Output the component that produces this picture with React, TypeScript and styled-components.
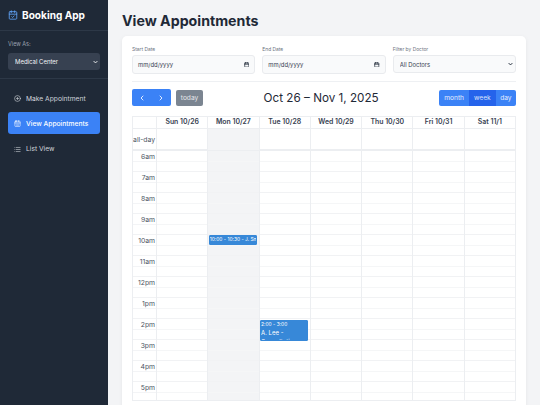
import React from 'react';
import styled, { createGlobalStyle } from 'styled-components';
import { ChevronLeft, ChevronRight, CalendarCheck, CirclePlus, CalendarDays, Calendar as CalendarIcon, List } from 'lucide-react';

const GlobalStyle = createGlobalStyle`
  html, body {
    margin: 0;
    padding: 0;
    height: 405px;
    overflow: hidden;
    font-family: Inter, "Liberation Sans", sans-serif;
    background: #f3f4f6;
  }
  * { box-sizing: border-box; }
`;

const chevron = (color: string) =>
  `url("data:image/svg+xml,%3Csvg xmlns='http://www.w3.org/2000/svg' viewBox='0 0 8 6'%3E%3Cpath d='M1 1.5l3 3 3-3' fill='none' stroke='${color}' stroke-width='1.5'/%3E%3C/svg%3E")`;

const Layout = styled.div`
  display: flex;
  width: 540px;
  height: 405px;
  overflow: hidden;
`;

const Sidebar = styled.aside`
  width: 108px;
  flex: none;
  background: #1f2937;
  color: #fff;
`;

const Brand = styled.div`
  height: 31px;
  padding: 0 8px;
  display: flex;
  align-items: center;
  gap: 4px;
  font-size: 10.1px;
  font-weight: 700;
  border-bottom: 1px solid #2d3847;
  svg { color: #60a5fa; }
`;

const ViewAs = styled.div`
  height: 48px;
  padding: 10px 8px 0;
  border-bottom: 1px solid #2d3847;
`;

const ViewAsLabel = styled.div`
  font-size: 5.5px;
  color: #9ca3af;
  line-height: 7px;
  margin-bottom: 5px;
`;

const ViewAsSelect = styled.select`
  display: block;
  appearance: none;
  width: 92px;
  height: 17px;
  font-family: inherit;
  font-size: 6px;
  color: #f3f4f6;
  background: #374151 ${chevron('%23f3f4f6')} no-repeat right 2px center / 5px 4px;
  border: none;
  border-radius: 3px;
  padding: 0 8px 0 7px;
`;

const Nav = styled.nav`
  padding: 8px 8px 0;
  display: flex;
  flex-direction: column;
  gap: 3.3px;
`;

const NavItem = styled.div<{ $active?: boolean }>`
  height: 22px;
  padding: 1px 6px 0;
  display: flex;
  align-items: center;
  gap: 5px;
  font-size: 6.7px;
  font-weight: ${({ $active }) => ($active ? 500 : 400)};
  border-radius: 3px;
  color: ${({ $active }) => ($active ? '#ffffff' : '#d1d5db')};
  background: ${({ $active }) => ($active ? '#3b82f6' : 'transparent')};
`;

const Main = styled.main`
  flex: 1;
  min-width: 0;
  padding: 12px 14px 0;
`;

const Title = styled.h1`
  margin: 0 0 6px;
  font-size: 14.2px;
  line-height: 18px;
  font-weight: 700;
  color: #1f2937;
`;

const Card = styled.section`
  background: #fff;
  border-radius: 5px;
  box-shadow: 0 1px 4px rgba(0, 0, 0, 0.06);
  padding: 10px 10px 0;
  height: 400px;
`;

const Filters = styled.div`
  display: grid;
  grid-template-columns: repeat(3, 1fr);
  gap: 7px;
  padding-bottom: 7px;
  border-bottom: 1px solid #eef0f3;
`;

const Field = styled.div`
  display: flex;
  flex-direction: column;
`;

const FieldLabel = styled.label`
  font-size: 4.9px;
  line-height: 6px;
  color: #6b7280;
  margin-bottom: 3px;
`;

const DateBox = styled.div`
  height: 19px;
  display: flex;
  align-items: center;
  justify-content: space-between;
  padding: 0 5px;
  background: #f9fafb;
  border: 1px solid #e9ebee;
  border-radius: 3px;
  font-size: 5.9px;
  color: #374151;
  svg { color: #1f2937; }
`;

const DoctorSelect = styled.select`
  appearance: none;
  height: 18px;
  width: 100%;
  background: #f9fafb ${chevron('%231f2937')} no-repeat right 2px center / 5px 4px;
  border: 1px solid #e9ebee;
  border-radius: 3px;
  font-family: inherit;
  font-size: 5.9px;
  color: #374151;
  padding: 0 8px 0 6px;
`;

const Toolbar = styled.div`
  height: 17px;
  margin: 7px 0 10px;
  display: flex;
  align-items: center;
  justify-content: space-between;
`;

const ToolGroup = styled.div`
  display: flex;
  align-items: center;
  gap: 5px;
`;

const ButtonGroup = styled.div`
  display: flex;
  border-radius: 2px;
  overflow: hidden;
`;

const ArrowButton = styled.button`
  width: 19.5px;
  height: 17px;
  padding: 0;
  border: none;
  background: #3b82f6;
  color: #fff;
  display: flex;
  align-items: center;
  justify-content: center;
`;

const TodayButton = styled.button`
  width: 27px;
  height: 16px;
  padding: 0;
  border: none;
  border-radius: 2px;
  background: #7b8591;
  color: #e5e7eb;
  font-family: inherit;
  font-size: 6.6px;
`;

const RangeTitle = styled.h2`
  margin: 0;
  font-size: 11.7px;
  font-weight: 400;
  color: #1f2937;
  white-space: nowrap;
`;

const ViewButton = styled.button<{ $active?: boolean; $w: number }>`
  width: ${({ $w }) => $w}px;
  height: 16px;
  padding: 0;
  border: none;
  font-family: inherit;
  font-size: 6.6px;
  color: ${({ $active }) => ($active ? '#dbe5fb' : '#e6eefe')};
  background: ${({ $active }) => ($active ? '#2563eb' : '#3b82f6')};
`;

const Calendar = styled.div`
  border: 1px solid #eceef1;
  width: 100%;
  height: 285px;
  overflow: hidden;
`;

const columns = '23px repeat(7, 1fr)';

const HeadRow = styled.div`
  display: grid;
  grid-template-columns: ${columns};
  height: 11.5px;
  border-bottom: 1px solid #eceef1;
`;

const HeadCell = styled.div`
  font-size: 6.9px;
  font-weight: 600;
  line-height: 10.5px;
  text-align: center;
  color: #374151;
  border-left: 1px solid #eceef1;
  white-space: nowrap;
  &:first-child { border-left: none; }
`;

const AllDayRow = styled.div`
  display: grid;
  grid-template-columns: ${columns};
  height: 22px;
  border-bottom: 2px solid #eceef1;
`;

const DayCell = styled.div<{ $today?: boolean }>`
  border-left: 1px solid #eceef1;
  background: ${({ $today }) => ($today ? '#f3f4f6' : 'transparent')};
`;

const AxisLabel = styled.div`
  font-size: 6.8px;
  line-height: 21px;
  color: #4b5563;
  text-align: right;
  padding-right: 1px;
`;

const Body = styled.div`
  display: grid;
  grid-template-columns: ${columns};
  position: relative;
`;

const Axis = styled.div`
  display: flex;
  flex-direction: column;
`;

const HourLabel = styled.div`
  height: 21px;
  flex: none;
  font-size: 6.8px;
  line-height: 11px;
  padding-right: 1px;
  text-align: right;
  color: #4b5563;
  border-bottom: 1px solid #f1f2f4;
  background: linear-gradient(#f3f4f6, #f3f4f6) 0 10px / 100% 1px no-repeat;
`;

const DayColumn = styled.div<{ $today?: boolean }>`
  position: relative;
  border-left: 1px solid #eceef1;
  background: ${({ $today }) => ($today ? '#f3f4f6' : 'transparent')};
`;

const Slot = styled.div`
  height: 21px;
  border-bottom: 1px solid #f1f2f4;
  background: linear-gradient(#f5f6f7, #f5f6f7) 0 10px / 100% 1px no-repeat;
`;

const Event = styled.div<{ $top: number; $h: number }>`
  position: absolute;
  top: ${({ $top }) => $top}px;
  left: 0.5px;
  right: 2px;
  height: ${({ $h }) => $h}px;
  overflow: hidden;
  background: #3788d8;
  border: 1px solid #3788d8;
  border-radius: 1px;
  color: #fff;
  font-size: 4.9px;
  line-height: 7.5px;
  white-space: nowrap;
`;

const EventTitle = styled.div`
  font-size: 6px;
  line-height: 9px;
  white-space: normal;
`;

const days = ['Sun 10/26', 'Mon 10/27', 'Tue 10/28', 'Wed 10/29', 'Thu 10/30', 'Fri 10/31', 'Sat 11/1'];
const hours = ['6am', '7am', '8am', '9am', '10am', '11am', '12pm', '1pm', '2pm', '3pm', '4pm', '5pm'];

const App: React.FC = () => {
  return (
    <Layout>
      <GlobalStyle />
      <Sidebar>
        <Brand>
          <CalendarCheck size={10} />
          Booking App
        </Brand>
        <ViewAs>
          <ViewAsLabel>View As:</ViewAsLabel>
          <ViewAsSelect defaultValue="Medical Center">
            <option>Medical Center</option>
          </ViewAsSelect>
        </ViewAs>
        <Nav>
          <NavItem>
            <CirclePlus size={7} />
            Make Appointment
          </NavItem>
          <NavItem $active>
            <CalendarDays size={7} />
            View Appointments
          </NavItem>
          <NavItem>
            <List size={7} />
            List View
          </NavItem>
        </Nav>
      </Sidebar>
      <Main>
        <Title>View Appointments</Title>
        <Card>
          <Filters>
            <Field>
              <FieldLabel>Start Date</FieldLabel>
              <DateBox>
                mm/dd/yyyy
                <CalendarIcon size={5.5} strokeWidth={3} />
              </DateBox>
            </Field>
            <Field>
              <FieldLabel>End Date</FieldLabel>
              <DateBox>
                mm/dd/yyyy
                <CalendarIcon size={5.5} strokeWidth={3} />
              </DateBox>
            </Field>
            <Field>
              <FieldLabel>Filter by Doctor</FieldLabel>
              <DoctorSelect defaultValue="All Doctors">
                <option>All Doctors</option>
              </DoctorSelect>
            </Field>
          </Filters>
          <Toolbar>
            <ToolGroup>
              <ButtonGroup>
                <ArrowButton><ChevronLeft size={8} strokeWidth={2.5} /></ArrowButton>
                <ArrowButton><ChevronRight size={8} strokeWidth={2.5} /></ArrowButton>
              </ButtonGroup>
              <TodayButton>today</TodayButton>
            </ToolGroup>
            <RangeTitle>Oct 26 – Nov 1, 2025</RangeTitle>
            <ButtonGroup>
              <ViewButton $w={29.7}>month</ViewButton>
              <ViewButton $w={26.7} $active>week</ViewButton>
              <ViewButton $w={20.3}>day</ViewButton>
            </ButtonGroup>
          </Toolbar>
          <Calendar>
            <HeadRow>
              <HeadCell />
              {days.map((day) => (
                <HeadCell key={day}>{day}</HeadCell>
              ))}
            </HeadRow>
            <AllDayRow>
              <AxisLabel>all-day</AxisLabel>
              {days.map((day, i) => (
                <DayCell key={day} $today={i === 1} />
              ))}
            </AllDayRow>
            <Body>
              <Axis>
                {hours.map((hour) => (
                  <HourLabel key={hour}>{hour}</HourLabel>
                ))}
              </Axis>
              {days.map((day, i) => (
                <DayColumn key={day} $today={i === 1}>
                  {hours.map((hour) => (
                    <Slot key={hour} />
                  ))}
                  {i === 1 && (
                    <Event $top={84} $h={10.5}>10:00 - 10:30 - J. Smith</Event>
                  )}
                  {i === 2 && (
                    <Event $top={169} $h={21}>
                      2:00 - 3:00
                      <EventTitle>A. Lee - Consultation</EventTitle>
                    </Event>
                  )}
                </DayColumn>
              ))}
            </Body>
          </Calendar>
        </Card>
      </Main>
    </Layout>
  );
};

export default App;
